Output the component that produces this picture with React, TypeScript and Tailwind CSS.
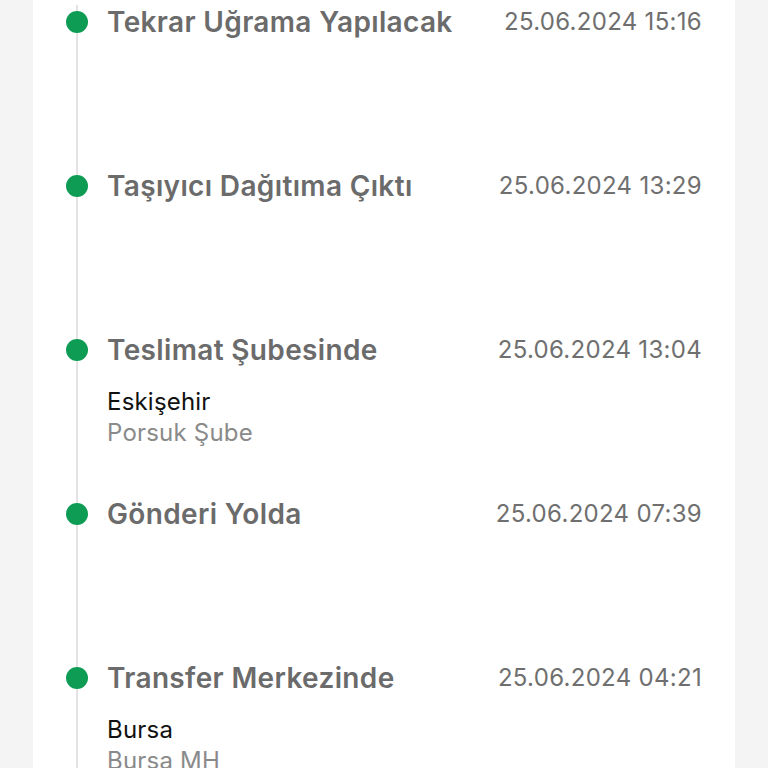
import React from "react";

type Item = { title: string; date: string; city?: string; branch?: string };

const items: Item[] = [
  { title: "Tekrar Uğrama Yapılacak", date: "25.06.2024 15:16" },
  { title: "Taşıyıcı Dağıtıma Çıktı", date: "25.06.2024 13:29" },
  { title: "Teslimat Şubesinde", date: "25.06.2024 13:04", city: "Eskişehir", branch: "Porsuk Şube" },
  { title: "Gönderi Yolda", date: "25.06.2024 07:39" },
  { title: "Transfer Merkezinde", date: "25.06.2024 04:21", city: "Bursa", branch: "Bursa MH" },
];

export default function App() {
  return (
    <div
      className="w-[768px] h-[768px] overflow-hidden bg-[#f4f4f4]"
      style={{ fontFamily: "Inter, 'Noto Sans', sans-serif" }}
    >
      <div className="ml-[33px] w-[702px] h-full bg-white pt-[5px]">
        {items.map((it, i) => (
          <div key={i} className="flex h-[164px]">
            <div className="relative w-[74px] shrink-0">
              <div className="absolute left-[43px] top-0 bottom-0 w-[2px] bg-[#e3e3e3]" />
              <div className="absolute left-[33px] top-[6px] w-[22px] h-[22px] rounded-full bg-[#0e9c55]" />
            </div>
            <div className="flex-1 pr-[33px]">
              <div className="flex items-start justify-between">
                <div className="text-[28px] leading-[34px] font-semibold text-[#6b6b6b] tracking-[0.35px]">
                  {it.title}
                </div>
                <div className="text-[24px] leading-[34px] text-[#6f6f6f] tracking-[0.3px]">{it.date}</div>
              </div>
              {it.city && (
                <div className="mt-[19px]">
                  <div className="text-[24px] leading-[31px] text-[#111] tracking-[0.2px]">{it.city}</div>
                  <div className="text-[24px] leading-[31px] text-[#8a8a8a] tracking-[0.2px]">{it.branch}</div>
                </div>
              )}
            </div>
          </div>
        ))}
      </div>
    </div>
  );
}
